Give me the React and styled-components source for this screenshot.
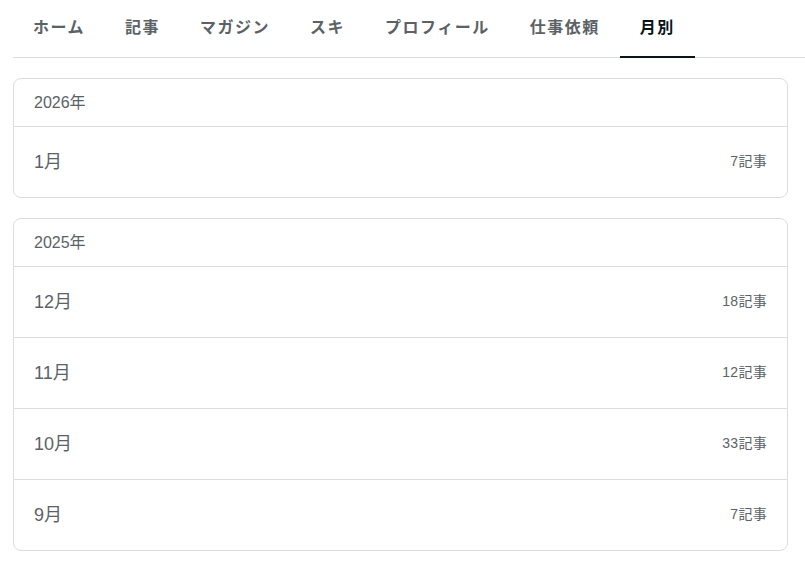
import React from "react"
import styled, { createGlobalStyle } from "styled-components"

const GlobalStyle = createGlobalStyle`
  * {
    box-sizing: border-box;
  }

  body {
    margin: 0;
    background: #fff;
    font-family: "Liberation Sans", "Noto Sans CJK JP", sans-serif;
    color: #5b6267;
  }
`

const Page = styled.div`
  padding: 0 0 0 13px;
`

const Tabs = styled.nav`
  display: flex;
  border-bottom: 1px solid #dcdcdc;
  margin-bottom: 20px;
`

const Tab = styled.a`
  position: relative;
  display: flex;
  align-items: center;
  height: 57px;
  padding: 0 20px 5px 20px;
  font-size: 16px;
  font-weight: 700;
  letter-spacing: 1.5px;
  color: ${({ active }) => (active ? "#08131a" : "#5b6267")};
  text-decoration: none;
  cursor: pointer;

  &::after {
    content: "";
    position: absolute;
    left: 0;
    right: 0;
    bottom: -1px;
    height: 2px;
    background: ${({ active }) => (active ? "#08131a" : "transparent")};
  }
`

const Archive = styled.div`
  display: flex;
  flex-direction: column;
  gap: 20px;
  width: 775px;
`

const YearCard = styled.section`
  border: 1px solid #dddddd;
  border-radius: 8px;
  overflow: hidden;
`

const YearHeader = styled.h2`
  margin: 0;
  display: flex;
  align-items: center;
  height: 47px;
  padding: 0 20px 4px;
  font-size: 16px;
  font-weight: 400;
  color: #5b6267;
`

const MonthRow = styled.a`
  display: flex;
  align-items: center;
  justify-content: space-between;
  height: 71px;
  padding: 0 20px 4px;
  border-top: 1px solid #dddddd;
  text-decoration: none;
  cursor: pointer;
`

const MonthLabel = styled.span`
  font-size: 18px;
  color: #5b6267;
`

const Count = styled.span`
  font-size: 14px;
  letter-spacing: 0.3px;
  color: #5b6267;
`

const tabs = ["ホーム", "記事", "マガジン", "スキ", "プロフィール", "仕事依頼", "月別"]

const years = [
  { year: 2026, months: [{ month: 1, count: 7 }] },
  {
    year: 2025,
    months: [
      { month: 12, count: 18 },
      { month: 11, count: 12 },
      { month: 10, count: 33 },
      { month: 9, count: 7 },
    ],
  },
]

export default function App() {
  return (
    <Page>
      <GlobalStyle />
      <Tabs>
        {tabs.map((t) => (
          <Tab key={t} active={t === "月別"}>
            {t}
          </Tab>
        ))}
      </Tabs>
      <Archive>
        {years.map(({ year, months }) => (
          <YearCard key={year}>
            <YearHeader>{year}年</YearHeader>
            {months.map(({ month, count }) => (
              <MonthRow key={month}>
                <MonthLabel>{month}月</MonthLabel>
                <Count>{count}記事</Count>
              </MonthRow>
            ))}
          </YearCard>
        ))}
      </Archive>
    </Page>
  )
}
